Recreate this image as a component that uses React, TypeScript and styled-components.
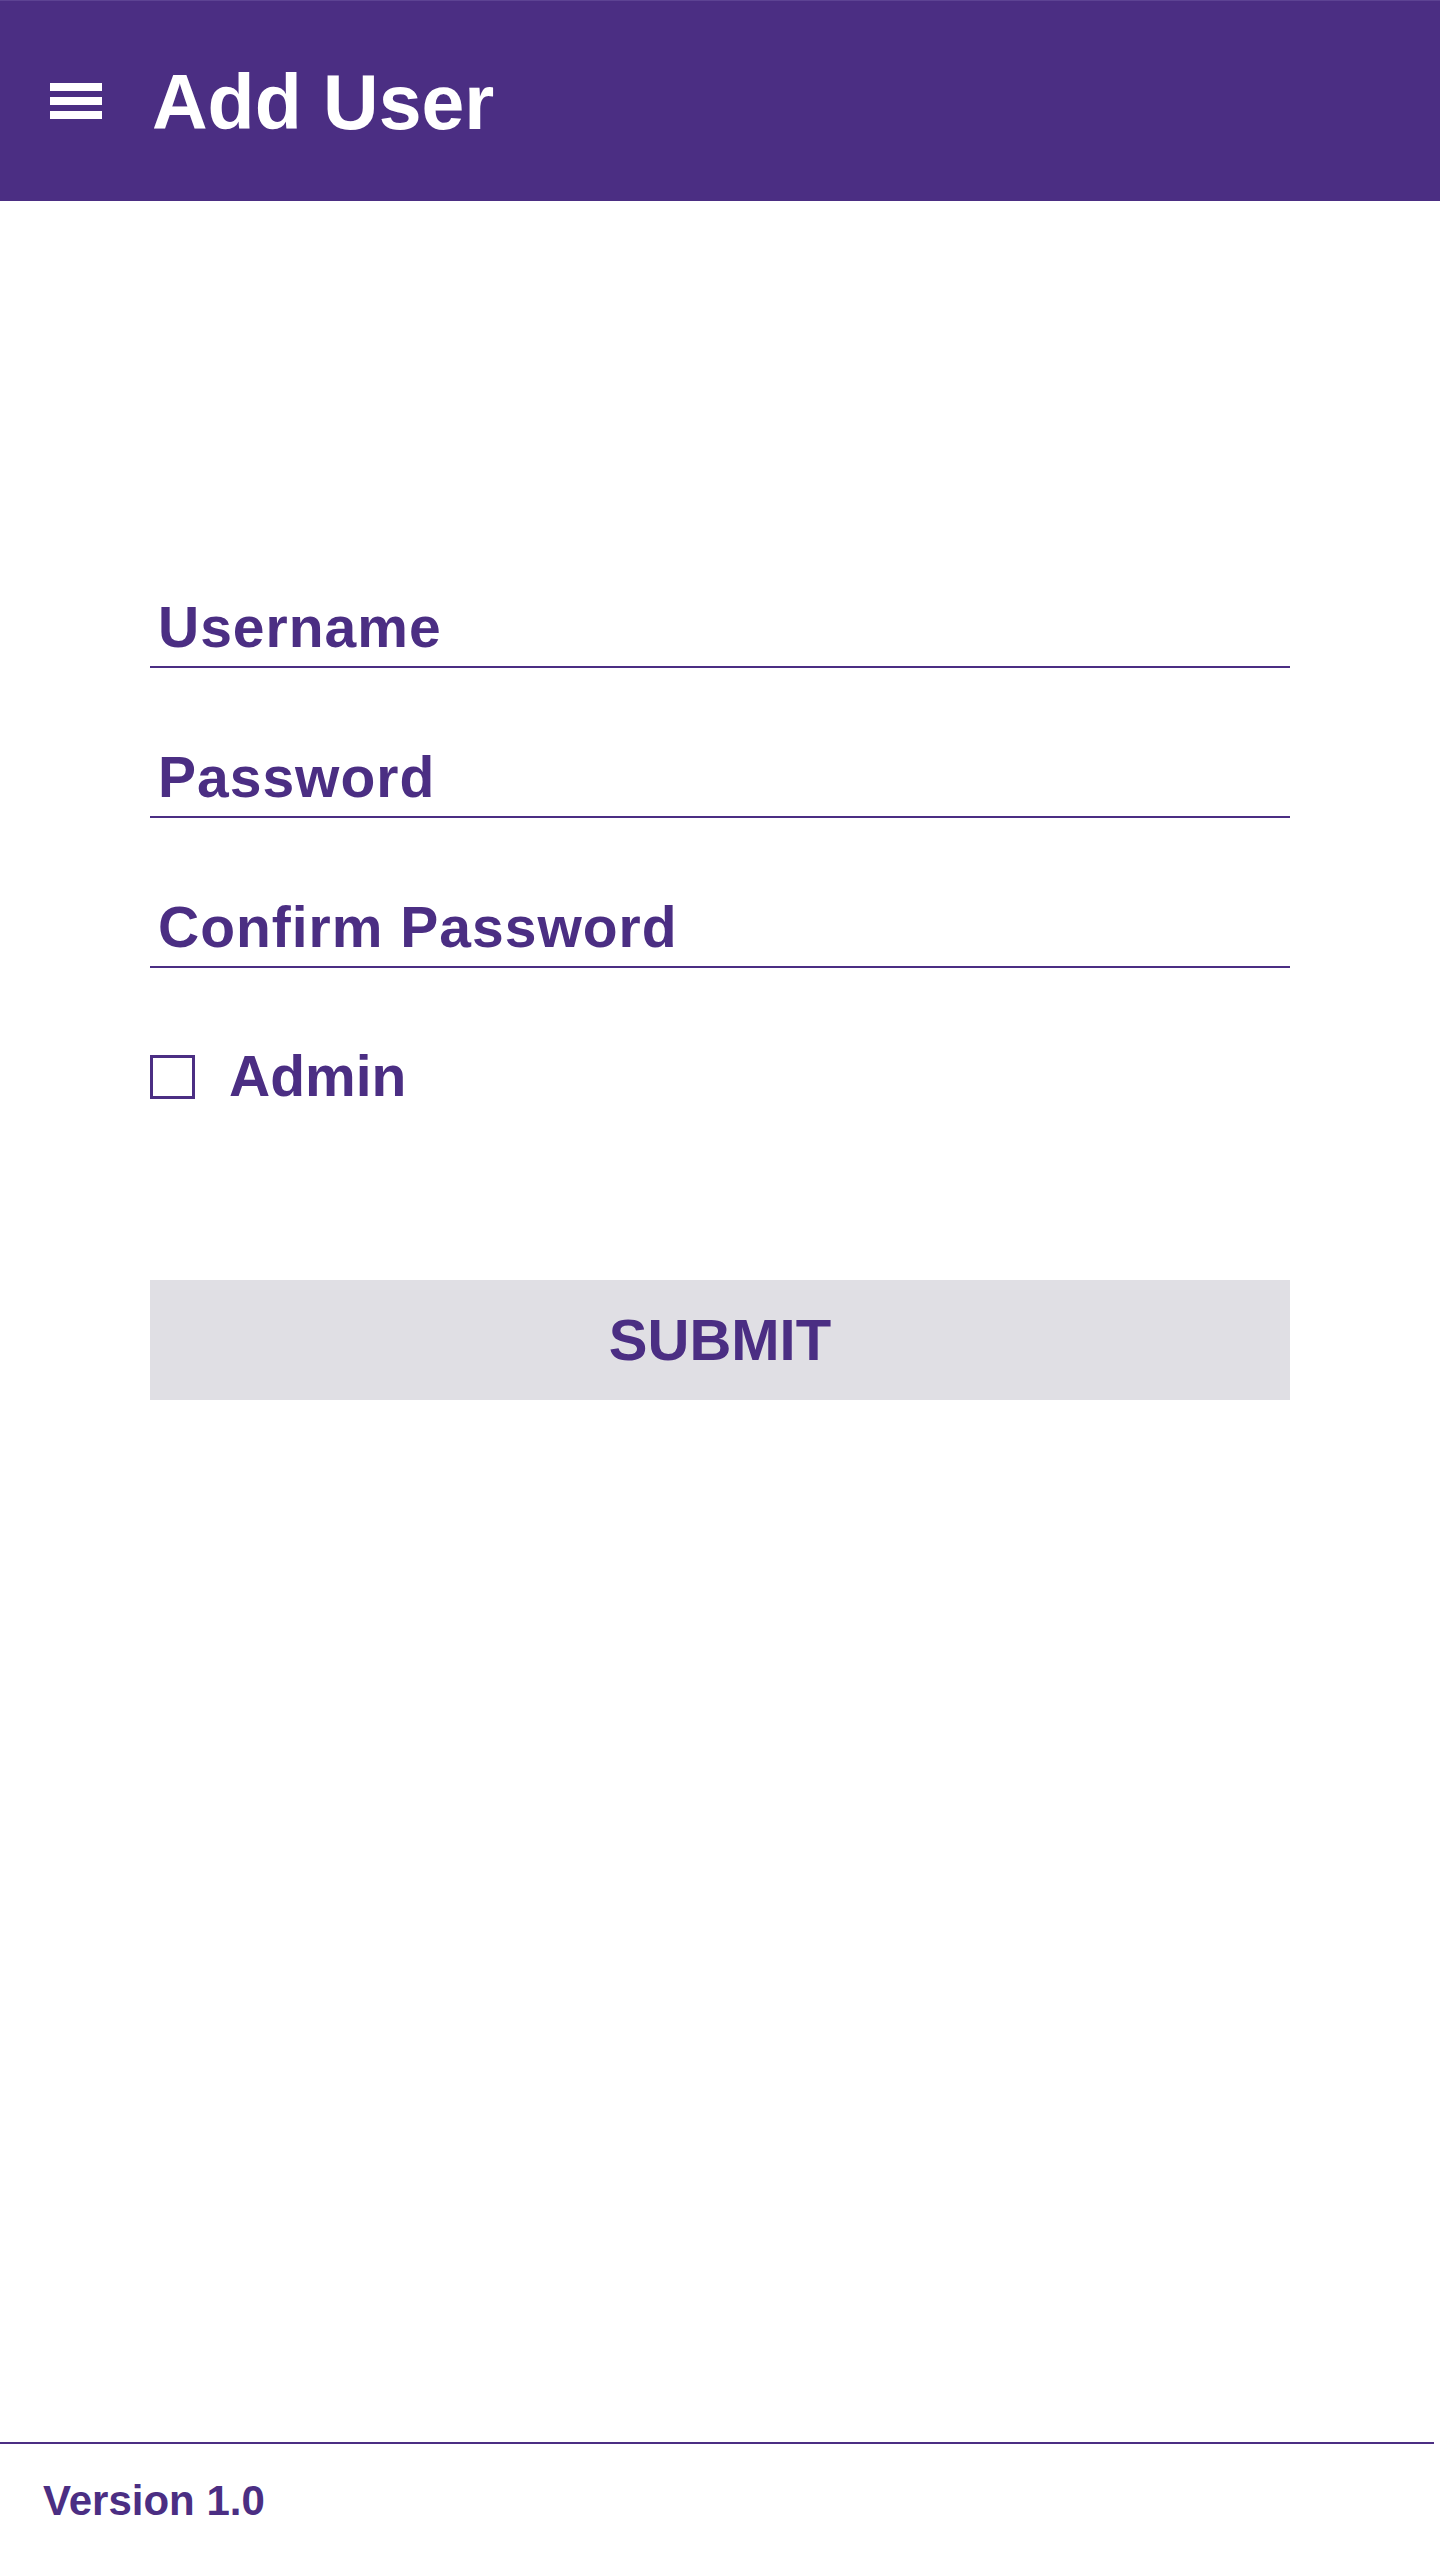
import React from "react";
import styled, { createGlobalStyle } from "styled-components";

const PURPLE = "#4b2e83";

const GlobalStyle = createGlobalStyle`
  html, body {
    margin: 0;
    padding: 0;
    background: #ffffff;
  }
  body {
    font-family: "Liberation Sans", Arial, sans-serif;
  }
  * { box-sizing: border-box; }
`;

const Page = styled.div`
  width: 1440px;
  height: 2560px;
  display: flex;
  flex-direction: column;
  background: #ffffff;
`;

const Header = styled.header`
  height: 201px;
  background: ${PURPLE};
  border-top: 1px solid #5d4393;
  display: flex;
  align-items: center;
  padding-left: 50px;
  gap: 50px;
`;

const MenuButton = styled.button`
  border: 0;
  padding: 0;
  background: transparent;
  display: flex;
  align-items: center;
  cursor: pointer;
`;

const Title = styled.h1`
  margin: 0;
  padding-top: 2px;
  font-size: 77px;
  line-height: 1;
  font-weight: 700;
  color: #ffffff;
`;

const Main = styled.main`
  flex: 1;
  padding: 397px 150px 0 150px;
  display: flex;
  flex-direction: column;
`;

const Form = styled.form`
  width: 1140px;
  display: flex;
  flex-direction: column;
  gap: 80px;
`;

const Field = styled.label`
  display: block;
  padding: 0 0 11px 8px;
  border-bottom: 2px solid ${PURPLE};
`;

const FieldInput = styled.input`
  display: block;
  width: 100%;
  border: 0;
  outline: none;
  padding: 0;
  margin: 0;
  height: 57px;
  background: transparent;
  font-family: "Liberation Sans", Arial, sans-serif;
  font-size: 57px;
  line-height: 1;
  font-weight: 700;
  letter-spacing: 1px;
  color: ${PURPLE};

  &::placeholder {
    color: ${PURPLE};
    opacity: 1;
  }
`;

const CheckRow = styled.label`
  display: flex;
  align-items: center;
  gap: 34px;
  height: 57px;
  cursor: pointer;
`;

const CheckBox = styled.span`
  width: 45px;
  height: 44px;
  border: 3px solid ${PURPLE};
  background: #ffffff;
  flex: none;
`;

const CheckLabel = styled.span`
  font-size: 57px;
  line-height: 1;
  font-weight: 700;
  color: ${PURPLE};
`;

const SubmitButton = styled.button`
  margin-top: 175px;
  width: 1140px;
  height: 120px;
  border: 0;
  background: #e0dfe4;
  color: ${PURPLE};
  font-family: "Liberation Sans", Arial, sans-serif;
  font-size: 58px;
  line-height: 1;
  font-weight: 700;
  text-transform: uppercase;
  display: flex;
  align-items: center;
  justify-content: center;
  cursor: pointer;
`;

const Footer = styled.footer`
  width: 1434px;
  height: 118px;
  border-top: 2px solid ${PURPLE};
  padding: 36px 0 0 43px;
`;

const Version = styled.span`
  display: block;
  font-size: 42px;
  line-height: 1;
  font-weight: 700;
  color: ${PURPLE};
`;

const MenuIcon = () => (
  <svg width="52" height="36" viewBox="0 0 52 36" aria-hidden="true">
    <rect x="0" y="0" width="52" height="8" fill="#ffffff" />
    <rect x="0" y="14" width="52" height="8" fill="#ffffff" />
    <rect x="0" y="28" width="52" height="8" fill="#ffffff" />
  </svg>
);

export default function App() {
  return (
    <>
      <GlobalStyle />
      <Page>
        <Header>
          <MenuButton type="button" aria-label="Menu">
            <MenuIcon />
          </MenuButton>
          <Title>Add User</Title>
        </Header>
        <Main>
          <Form onSubmit={(e) => e.preventDefault()}>
            <Field>
              <FieldInput type="text" placeholder="Username" />
            </Field>
            <Field>
              <FieldInput type="password" placeholder="Password" />
            </Field>
            <Field>
              <FieldInput type="password" placeholder="Confirm Password" />
            </Field>
            <CheckRow>
              <CheckBox />
              <CheckLabel>Admin</CheckLabel>
            </CheckRow>
          </Form>
          <SubmitButton type="button">Submit</SubmitButton>
        </Main>
        <Footer>
          <Version>Version 1.0</Version>
        </Footer>
      </Page>
    </>
  );
}
